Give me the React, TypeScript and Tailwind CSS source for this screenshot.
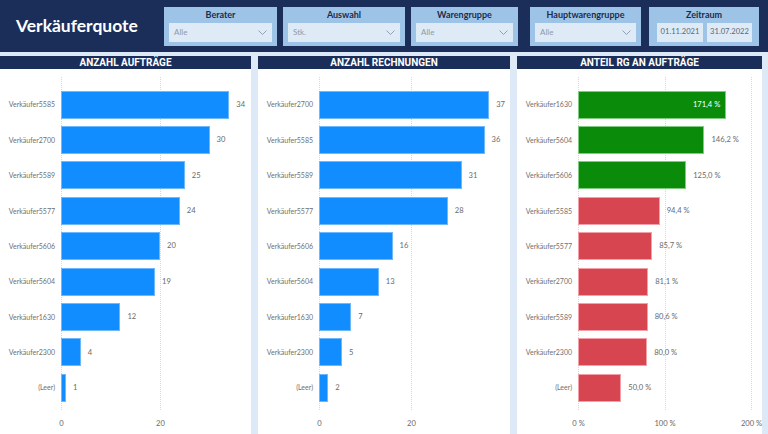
import React from "react";

type Row = {
  label: string;
  value: number;
  text: string;
  barClass: string;
  inside?: boolean;
};

type ChartProps = {
  title: string;
  rows: Row[];
  scale: number;
  ticks: { value: number; label: string }[];
  panelClass: string;
};

const blue = "bg-[#118dff] border border-[#6db8ff]";
const green = "bg-[#0a8c0a] border border-[#7fcc7f]";
const red = "bg-[#d64550] border border-[#f0a0a6]";

const auftraege: Row[] = [
  { label: "Verkäufer5585", value: 34, text: "34", barClass: blue },
  { label: "Verkäufer2700", value: 30, text: "30", barClass: blue },
  { label: "Verkäufer5589", value: 25, text: "25", barClass: blue },
  { label: "Verkäufer5577", value: 24, text: "24", barClass: blue },
  { label: "Verkäufer5606", value: 20, text: "20", barClass: blue },
  { label: "Verkäufer5604", value: 19, text: "19", barClass: blue },
  { label: "Verkäufer1630", value: 12, text: "12", barClass: blue },
  { label: "Verkäufer2300", value: 4, text: "4", barClass: blue },
  { label: "(Leer)", value: 1, text: "1", barClass: blue },
];

const rechnungen: Row[] = [
  { label: "Verkäufer2700", value: 37, text: "37", barClass: blue },
  { label: "Verkäufer5585", value: 36, text: "36", barClass: blue },
  { label: "Verkäufer5589", value: 31, text: "31", barClass: blue },
  { label: "Verkäufer5577", value: 28, text: "28", barClass: blue },
  { label: "Verkäufer5606", value: 16, text: "16", barClass: blue },
  { label: "Verkäufer5604", value: 13, text: "13", barClass: blue },
  { label: "Verkäufer1630", value: 7, text: "7", barClass: blue },
  { label: "Verkäufer2300", value: 5, text: "5", barClass: blue },
  { label: "(Leer)", value: 2, text: "2", barClass: blue },
];

const anteil: Row[] = [
  { label: "Verkäufer1630", value: 171.4, text: "171,4 %", barClass: green, inside: true },
  { label: "Verkäufer5604", value: 146.2, text: "146,2 %", barClass: green },
  { label: "Verkäufer5606", value: 125.0, text: "125,0 %", barClass: green },
  { label: "Verkäufer5585", value: 94.4, text: "94,4 %", barClass: red },
  { label: "Verkäufer5577", value: 85.7, text: "85,7 %", barClass: red },
  { label: "Verkäufer2700", value: 81.1, text: "81,1 %", barClass: red },
  { label: "Verkäufer5589", value: 80.6, text: "80,6 %", barClass: red },
  { label: "Verkäufer2300", value: 80.0, text: "80,0 %", barClass: red },
  { label: "(Leer)", value: 50.0, text: "50,0 %", barClass: red },
];

function Chevron() {
  return (
    <svg width="9" height="5" viewBox="0 0 9 5" className="shrink-0">
      <path d="M0.5 0.5 L4.5 4.5 L8.5 0.5" fill="none" stroke="#8a97a8" strokeWidth="0.9" />
    </svg>
  );
}

function Slicer({ title, value, className }: { title: string; value: string; className: string }) {
  return (
    <div className={`h-[39px] bg-[#9dc3e6] flex flex-col ${className}`}>
      <div className="h-[15px] pt-[1px] text-center text-[9px] font-bold text-[#1f2b48] leading-[14px]">
        {title}
      </div>
      <div className="mx-[5px] mt-[1px] h-[19px] bg-[#deebf7] flex items-center justify-between pl-[5px] pr-[5px] text-[8px] text-[#8d99a6]">
        <span>{value}</span>
        <Chevron />
      </div>
    </div>
  );
}

function Chart({ title, rows, scale, ticks, panelClass }: ChartProps) {
  return (
    <div className={`flex flex-col bg-white ${panelClass}`}>
      <div className="h-[13px] bg-[#1b2e5a] text-white text-center font-['Roboto',sans-serif] font-bold text-[10px] leading-[14px]">
        {title}
      </div>
      <div className="relative flex-1 pt-[18px]">
        {ticks.map((t) => (
          <div
            key={t.label}
            className="absolute top-[8px] h-[333px] w-0 border-l border-dotted border-[#d8d8d8]"
            style={{ left: 61 + t.value * scale }}
          />
        ))}
        <div className="relative flex flex-col">
          {rows.map((r) => (
            <div key={r.label} className="h-[35.375px] flex items-center">
              <div className="w-[56px] shrink-0 pr-[1px] text-right text-[7px] text-[#707070] whitespace-nowrap">
                {r.label}
              </div>
              <div className="ml-[5px] flex items-center">
                <div
                  className={`h-[28px] flex items-center justify-end ${r.barClass}`}
                  style={{ width: Math.max(r.value * scale, 4) }}
                >
                  {r.inside && (
                    <span className="pr-[5px] text-[7.6px] text-white whitespace-nowrap">{r.text}</span>
                  )}
                </div>
                {!r.inside && (
                  <span className="ml-[7px] text-[7.6px] text-[#6a6a6a] whitespace-nowrap">{r.text}</span>
                )}
              </div>
            </div>
          ))}
        </div>
        <div className="relative h-[12px] mt-[12px]">
          {ticks.map((t) => (
            <span
              key={t.label}
              className="absolute top-0 -translate-x-1/2 text-[7.6px] leading-[12px] text-[#6a6a6a] whitespace-nowrap"
              style={{ left: 61.5 + t.value * scale }}
            >
              {t.label}
            </span>
          ))}
        </div>
      </div>
    </div>
  );
}

export default function App() {
  return (
    <div className="w-[768px] h-[434px] overflow-hidden bg-[#dde9f6] flex flex-col font-['Lato',sans-serif]">
      <div className="h-[52px] shrink-0 bg-[#1b2e5a] flex items-center">
        <div className="w-[164px] pl-[16px] text-white font-bold text-[17.5px] leading-none pb-[1px]">
          Verkäuferquote
        </div>
        <Slicer title="Berater" value="Alle" className="w-[113px]" />
        <Slicer title="Auswahl" value="Stk." className="w-[122px] ml-[6px]" />
        <Slicer title="Warengruppe" value="Alle" className="w-[107px] ml-[6px]" />
        <Slicer title="Hauptwarengruppe" value="Alle" className="w-[111px] ml-[12px]" />
        <div className="h-[39px] w-[110px] ml-[8px] bg-[#9dc3e6] flex flex-col">
          <div className="h-[15px] pt-[1px] text-center text-[9px] font-bold text-[#1f2b48] leading-[14px]">
            Zeitraum
          </div>
          <div className="mt-[1px] flex pl-[8px] gap-[4px]">
            <div className="w-[46px] h-[19px] bg-[#deebf7] flex items-center justify-center text-[7.6px] text-[#5a6678]">
              01.11.2021
            </div>
            <div className="w-[45px] h-[19px] bg-[#deebf7] flex items-center justify-center text-[7.6px] text-[#5a6678]">
              31.07.2022
            </div>
          </div>
        </div>
      </div>
      <div className="flex-1 flex pt-[4px]">
        <Chart
          title="ANZAHL AUFTRÄGE"
          rows={auftraege}
          scale={4.95}
          ticks={[
            { value: 0, label: "0" },
            { value: 20, label: "20" },
          ]}
          panelClass="w-[251px]"
        />
        <Chart
          title="ANZAHL RECHNUNGEN"
          rows={rechnungen}
          scale={4.6}
          ticks={[
            { value: 0, label: "0" },
            { value: 20, label: "20" },
          ]}
          panelClass="w-[252px] ml-[7px]"
        />
        <Chart
          title="ANTEIL RG AN AUFTRÄGE"
          rows={anteil}
          scale={0.865}
          ticks={[
            { value: 0, label: "0 %" },
            { value: 100, label: "100 %" },
            { value: 200, label: "200 %" },
          ]}
          panelClass="w-[245px] ml-[7px]"
        />
      </div>
    </div>
  );
}
